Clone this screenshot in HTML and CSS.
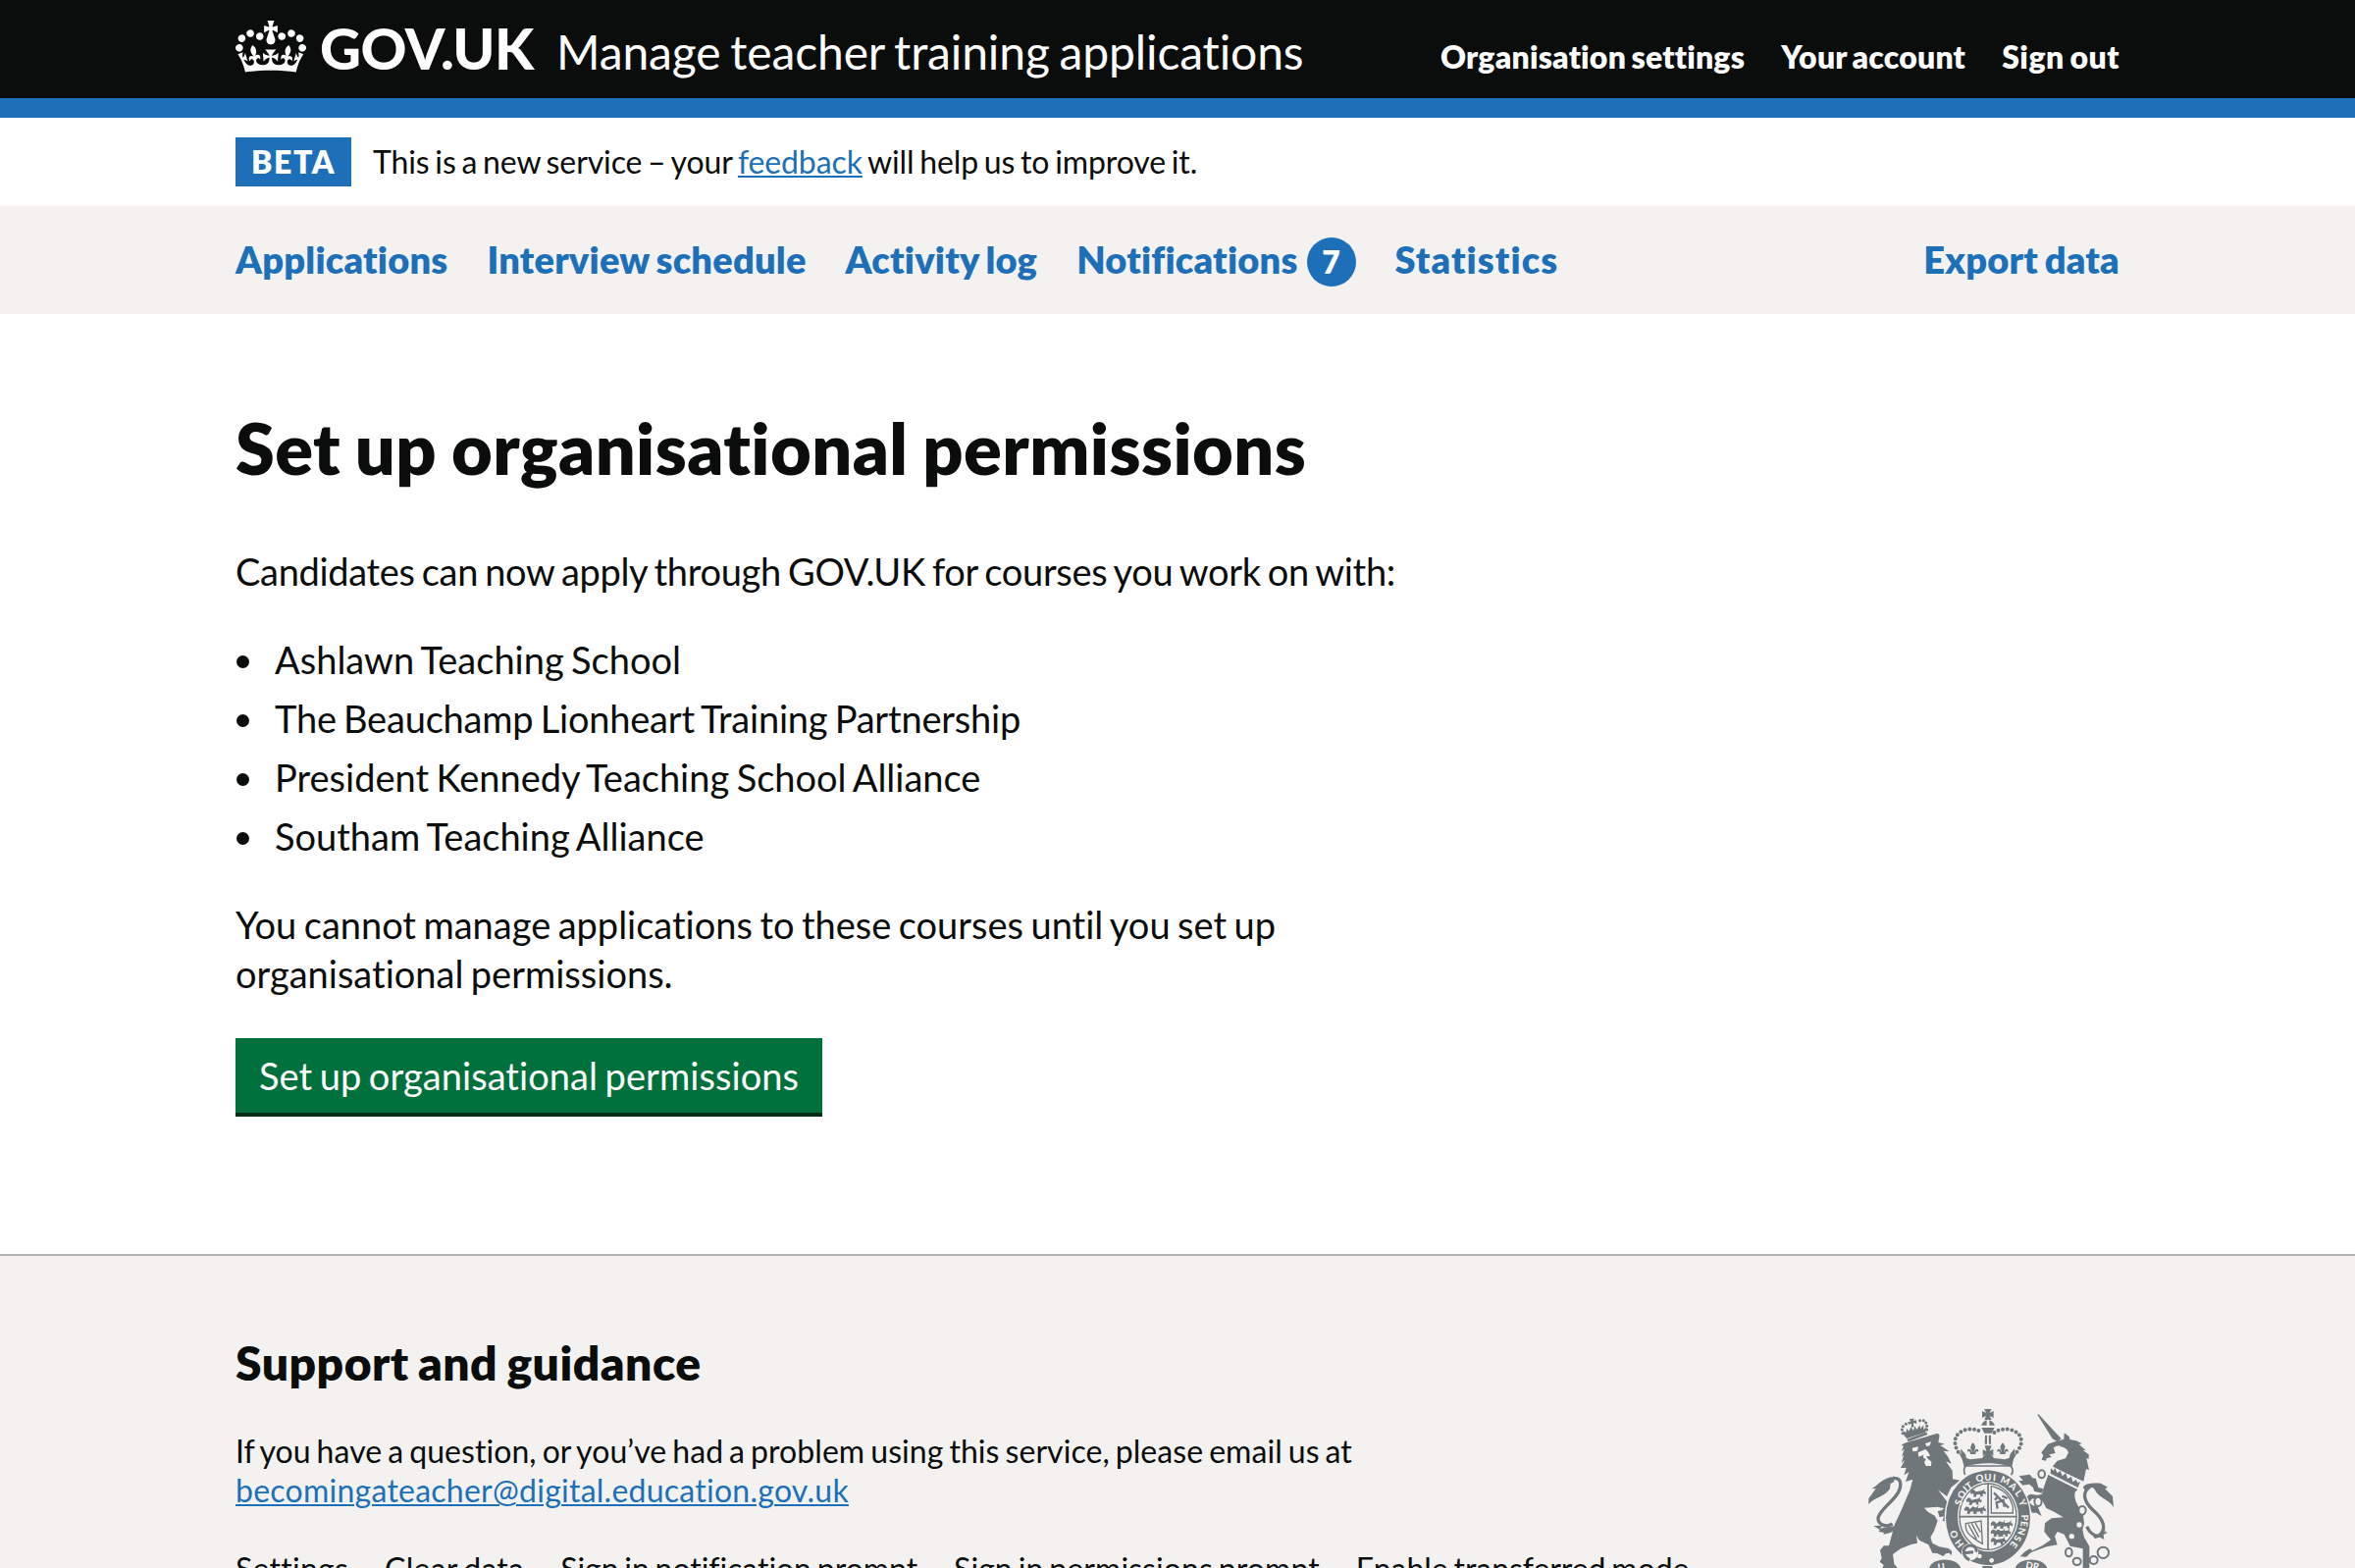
FILE: index.html
```html
<!DOCTYPE html>
<html lang="en">
<head>
<meta charset="utf-8">
<title>Set up organisational permissions - Manage teacher training applications - GOV.UK</title>
<link rel="stylesheet" href="styles.css">
</head>
<body>
<header class="header">
  <div class="container header-inner">
    <a class="logo" href="#">
      <svg class="crown" viewBox="0 0 132 97" preserveAspectRatio="none" aria-hidden="true"><path fill="currentColor" d="M25 30.2c3.5 1.5 7.7-.2 9.1-3.7 1.5-3.6-.2-7.8-3.9-9.2-3.6-1.4-7.6.3-9.1 3.9-1.4 3.5.3 7.5 3.9 9zM9 39.5c3.6 1.5 7.8-.2 9.2-3.7 1.5-3.6-.2-7.8-3.9-9.1-3.6-1.5-7.6.2-9.1 3.8-1.4 3.5.3 7.5 3.8 9zM4.4 57.2c3.5 1.5 7.7-.2 9.1-3.8 1.5-3.6-.2-7.7-3.9-9.1-3.5-1.5-7.6.3-9.1 3.8-1.4 3.5.3 7.6 3.9 9.1zm38.3-21.4c3.5 1.5 7.7-.2 9.1-3.8 1.5-3.6-.2-7.7-3.9-9.1-3.6-1.5-7.6.3-9.1 3.8-1.3 3.6.4 7.7 3.9 9.1zm64.4-5.6c-3.6 1.5-7.8-.2-9.1-3.7-1.5-3.6.2-7.8 3.8-9.2 3.6-1.4 7.7.3 9.2 3.9 1.3 3.5-.4 7.5-3.9 9zm15.9 9.3c-3.6 1.5-7.7-.2-9.1-3.7-1.5-3.6.2-7.8 3.7-9.1 3.6-1.5 7.7.2 9.2 3.8 1.5 3.5-.3 7.5-3.8 9zm4.7 17.7c-3.6 1.5-7.8-.2-9.2-3.8-1.5-3.6.2-7.7 3.9-9.1 3.6-1.5 7.7.3 9.2 3.8 1.3 3.5-.4 7.6-3.9 9.1zM89.3 35.8c-3.6 1.5-7.8-.2-9.2-3.8-1.4-3.6.2-7.7 3.9-9.1 3.6-1.5 7.7.3 9.2 3.8 1.4 3.6-.3 7.7-3.9 9.1zM69.7 17.7l8.9 4.7V9.3l-8.9 2.8c-.2-.3-.5-.6-.9-.9L72.4 0H59.6l3.5 11.2c-.3.3-.6.5-.9.9l-8.8-2.8v13.1l8.8-4.7c.3.3.6.7.9.9l-5 15.4v.1c-.2.8-.4 1.6-.4 2.4 0 4.1 3.1 7.5 7 8.1h.2c.3 0 .7.1 1 .1.4 0 .7 0 1-.1h.2c4-.6 7.1-4.1 7.1-8.1 0-.8-.1-1.7-.4-2.4V34l-5.1-15.4c.4-.2.7-.6 1-.9zM66 92.8c16.9 0 32.8 1.1 47.1 3.2 4-16.9 8.9-26.7 14-33.5l-9.6-3.4c1 4.9 1.1 7.2 0 10.2-1.5-1.4-3-4.3-4.2-8.7L108.6 76c2.8-2 5-3.2 7.5-3.3-4.4 9.4-10 11.9-13.6 11.2-4.3-.8-6.3-4.6-5.6-7.9 1-4.7 5.7-5.9 8-.5 4.3-8.7-3-11.4-7.6-8.8 7.1-7.2 7.9-13.5 2.1-21.1-8 6.1-8.1 12.3-4.5 20.8-4.7-5.4-12.1-2.5-9.5 6.2 3.4-5.2 7.9-2 7.2 3.1-.6 4.3-6.4 7.8-13.5 7.2-10.3-.9-10.9-8-11.2-13.8 2.5-.5 7.1 1.8 11 7.3L80.2 60c-4.1 4.4-8 5.3-12.3 5.4 1.4-4.4 8-11.6 8-11.6H55.5s6.4 7.2 7.9 11.6c-4.2-.1-8-1-12.3-5.4l1.4 16.4c3.9-5.5 8.5-7.7 10.9-7.3-.3 5.8-.9 12.8-11.1 13.8-7.2.6-12.9-2.9-13.5-7.2-.7-5 3.8-8.3 7.1-3.1 2.7-8.7-4.6-11.6-9.4-6.2 3.7-8.5 3.6-14.7-4.6-20.8-5.8 7.6-5 13.9 2.2 21.1-4.7-2.6-11.9.1-7.7 8.8 2.3-5.5 7.1-4.2 8.1.5.7 3.3-1.3 7.1-5.7 7.9-3.5.7-9-1.8-13.5-11.2 2.5.1 4.7 1.3 7.5 3.3l-4.7-15.4c-1.2 4.4-2.7 7.2-4.3 8.7-1.1-3-.9-5.3 0-10.2l-9.5 3.4c5 6.9 9.9 16.7 14 33.5 14.8-2.1 30.8-3.2 47.7-3.2z"/></svg>
      <span class="logotype">GOV.UK</span>
    </a>
    <a class="service-name" href="#">Manage teacher training applications</a>
    <nav class="account-nav">
      <a href="#">Organisation settings</a>
      <a href="#">Your account</a>
      <a class="sign-out" href="#">Sign out</a>
    </nav>
  </div>
</header>
<div class="brand-bar"></div>
<div class="container phase-banner">
  <strong class="tag">BETA</strong>
  <span class="phase-text">This is a new service – your <a class="link" href="#">feedback</a> will help us to improve it.</span>
</div>
<div class="primary-nav">
  <nav class="container primary-nav-inner">
    <a href="#">Applications</a>
    <a href="#">Interview schedule</a>
    <a href="#">Activity log</a>
    <a class="notifications" href="#">Notifications<span class="count">7</span></a>
    <a class="statistics" href="#">Statistics</a>
    <a class="export" href="#">Export data</a>
  </nav>
</div>
<main class="container main">
  <h1 class="title">Set up organisational permissions</h1>
  <p class="intro">Candidates can now apply through GOV.UK for courses you work on with:</p>
  <ul class="list">
    <li>Ashlawn Teaching School</li>
    <li class="tight">The Beauchamp Lionheart Training Partnership</li>
    <li>President Kennedy Teaching School Alliance</li>
    <li>Southam Teaching Alliance</li>
  </ul>
  <p>You cannot manage applications to these courses until you set up<br>organisational permissions.</p>
  <a class="button" href="#">Set up organisational permissions</a>
</main>
<footer class="footer">
  <div class="container footer-inner">
    <div class="support">
      <h2 class="support-title">Support and guidance</h2>
      <p class="small">If you have a question, or you’ve had a problem using this service, please email us at<br><a class="link email" href="#">becomingateacher@digital.education.gov.uk</a></p>
      <div class="footer-links">
        <a class="wide" href="#">Settings</a>
        <a class="wide" href="#">Clear data</a>
        <a href="#">Sign in notification prompt</a>
        <a class="mid" href="#">Sign in permissions prompt</a>
        <a href="#">Enable transferred mode</a>
      </div>
    </div>
    <svg class="crest" viewBox="72 45 750 489" aria-hidden="true">
      <defs>
        <path id="leopard" d="M0 8l6-8 8 2 2 5 22-4 6-7-2 9 6 3-2 8-5-4-4 3 2 7-8-1-1-6-11 1-2 7-9-1 3-6-4-4-5 2z"/>
        <g id="fleur"><path d="M0-17C-10-6-8 2-3 9L-3 18H3L3 9C8 2 10-6 0-17Z"/><path d="M-3 12C-8-2-20 0-16 12C-12 6-8 10-8 18H8C8 10 12 6 16 12C20 0 8-2 3 12Z"/></g>
      </defs>
      <!-- lion -->
      <g fill="currentColor">
        <path d="M173 157L190 150L284 122L290 128L286 150L306 155L292 159L320 178L302 176L316 194L326 215L309 208L329 236L330 262L352 266L325 288L312 316L348 337L339 347L347 367L352 382L340 400L320 408L312 394L299 389L303 376L290 379L284 360L296 358L304 352L283 347L243 350L254 362L275 374L284 390L273 421L262 440L268 458L289 469L317 474L327 482L327 495L319 488L309 490L301 498L282 489L268 488L256 463L228 449L219 434L222 458L203 462L171 475L147 492L151 521L161 534H115L119 525L107 515L113 504L108 480L119 466L135 466L153 400L174 355L199 296L208 263L186 270L196 241L181 250L188 228L171 228L184 204L173 213L181 188L174 194L182 171L173 176L180 162Z"/>
        <path d="M151 255C116 257 102 281 82 292L95 291L73 322L73 340C91 315 116 322 138 292L140 276L151 270Z"/>
        <path d="M88 405L115 404L108 413L130 409L159 405C149 431 127 426 118 433L120 426L104 423L107 417Z"/>
        <path d="M190 140L250 119L253 126L194 148Z"/>
        <path d="M182 130L178 114L187 120L190 107L196 116L202 103L210 114L214 100L220 111L230 97L231 109L241 97L241 111L250 103L247 120L190 138Z"/>
        <path d="M198 78L213 77L209 84L219 82L220 93L210 90L211 103L204 104L203 92L195 96L193 87L201 87Z"/>
        <g><circle cx="177" cy="122" r="4.5"/><circle cx="175" cy="111" r="4.5"/><circle cx="178" cy="101" r="4.5"/><circle cx="187" cy="94" r="4.5"/><circle cx="230" cy="83" r="4.5"/><circle cx="241" cy="83" r="4.5"/><circle cx="248" cy="90" r="4.5"/><circle cx="251" cy="100" r="4.5"/><circle cx="251" cy="111" r="4.5"/></g>
      </g>
      <path d="M148 259C178 257 174 289 158 311C134 343 108 357 102 381C101 402 127 411 146 399" fill="none" stroke="currentColor" stroke-width="10"/>
      <g class="ground">
        <path d="M206 167L225 163L222 176L208 178ZM246 153L264 148L260 160L250 162ZM224 181L247 171L255 179L261 192L249 193L255 201L265 209L264 222H248L243 211L248 201L240 197L241 188L226 194Z"/>
        <path d="M285 295L330 328L337 335L312 330Z"/>
      </g>
      <!-- unicorn -->
      <g fill="currentColor">
        <path d="M588 64L594 65L662 139L650 148L635 139Z"/>
        <path d="M601 181L621 155L638 149L670 140L671 121L686 132L688 141L708 145L725 154L716 156L737 174L728 174L746 187L746 201L739 198L747 235L738 231L730 269L634 225L650 206L675 199L684 181C679 164 660 160 638 166L644 183L625 187L632 195L617 199L615 206L602 203L607 190Z"/>
        <path d="M622 249L712 294L704 302C700 323 710 342 728 365L732 397L727 418L732 440L748 468V534H728V475L689 467L671 431L650 423L642 437L650 463L617 469L570 486L555 500L536 499L552 483L567 475L574 481L605 465L630 448L610 423L612 397L632 382L668 379L640 362L616 351L604 328L574 322L563 333L575 343L589 344L602 376L586 365L573 365L563 346L548 341L550 320L567 308L589 311L603 308L609 286Z"/>
        <path d="M533 253L566 248L574 259L584 260L592 288L607 292L603 305L579 299L576 288L564 278L544 281L532 268L545 266Z"/>
        <path d="M728 287C738 274 756 274 783 275L804 287L796 292L819 315L822 348C806 324 783 321 770 304C764 294 763 286 750 287L737 300Z"/>
        <path d="M758 434C776 438 788 427 800 416L795 424L804 425L791 432L793 447L780 440L764 444Z"/>
      </g>
      <path d="M754 283C719 303 735 335 759 357C789 383 804 414 777 435C762 438 748 424 740 407" fill="none" stroke="currentColor" stroke-width="10"/>
      <g class="ground"><path d="M640 163L656 160L664 166L648 167ZM667 181L676 181L674 194L661 201Z"/><circle cx="717" cy="402" r="8"/><circle cx="694" cy="437" r="8"/><path d="M633 222L731 272L714 294L624 248Z"/></g>
      <path fill="currentColor" d="M630 229L639 237L642 227L650 244L659 236L665 253L676 244L681 261L693 255L697 271L707 264L712 274L720 269L713 288L629 245Z"/>
      <g fill="none" stroke="currentColor" stroke-width="6"><ellipse cx="602" cy="247" rx="10" ry="12"/><ellipse class="ground" cx="591" cy="331" rx="11" ry="14"/><ellipse class="ground" cx="726" cy="358" rx="11" ry="13"/><ellipse cx="685" cy="486" rx="10" ry="13"/><ellipse cx="710" cy="514" rx="12" ry="11"/><circle cx="761" cy="510" r="12"/><circle cx="790" cy="487" r="17"/></g>
      <!-- garter and shield -->
      <ellipse class="ground" cx="438" cy="381" rx="133" ry="150"/>
      <ellipse cx="438" cy="380" rx="129" ry="145" fill="currentColor"/>
      <ellipse class="ground" cx="438" cy="377" rx="93" ry="107"/>
      <ellipse cx="438" cy="377" rx="87" ry="101" fill="none" stroke="currentColor" stroke-width="4"/>
      <g fill="none" stroke="currentColor" stroke-width="5"><path d="M438 274V480M350 377H526"/><path d="M448 290V366H514V346C507 318 487 292 448 284Z" stroke-width="4"/><path d="M370 398L417 390L421 460L407 452C385 435 367 427 370 398ZM378 401L403 446M388 398L410 440M399 396L415 425" stroke-width="4"/><path d="M456 304L484 333L501 350M481 314L497 321M467 353L464 334L485 327L488 347M468 315L459 326" stroke-width="7"/></g>
      <g fill="currentColor"><use href="#leopard" x="384" y="294"/><use href="#leopard" x="371" y="319"/><use href="#leopard" x="365" y="346"/><use href="#leopard" x="384" y="346"/><use href="#leopard" x="446" y="391"/><use href="#leopard" x="466" y="391"/><use href="#leopard" x="446" y="416"/><use href="#leopard" x="460" y="416"/><use href="#leopard" x="446" y="441"/></g>
      <g class="motto"><text transform="translate(354 345) rotate(-68)">S</text><text transform="translate(360 325) rotate(-58)">O</text><text transform="translate(373 303) rotate(-42)">I</text><text transform="translate(379 296) rotate(-35)">T</text><text transform="translate(402 271) rotate(-8)">Q</text><text transform="translate(427 268)">U</text><text transform="translate(452 268) rotate(5)">I</text><text transform="translate(474 271) rotate(22)">M</text><text transform="translate(500 286) rotate(40)">A</text><text transform="translate(519 305) rotate(54)">L</text><text transform="translate(530 330) rotate(66)">Y</text><text transform="translate(540 371) rotate(88)">P</text><text transform="translate(539 390) rotate(96)">E</text><text transform="translate(534 409) rotate(105)">N</text><text transform="translate(523 432) rotate(116)">S</text><text transform="translate(513 450) rotate(124)">E</text><text transform="translate(365 461) rotate(-128)">H</text><text transform="translate(348 438) rotate(-112)">O</text></g>
      <g><circle class="ground" cx="383" cy="485" r="26"/><path d="M370 470C360 479 362 501 382 509M370 470C388 458 407 471 401 485M364 488L393 485" fill="none" stroke="currentColor" stroke-width="9"/><circle class="ground" cx="412" cy="498" r="7"/><circle class="ground" cx="449" cy="511" r="7"/></g>
      <!-- crown over the shield -->
      <path class="ground" d="M364 218H514V250L492 246L438 233L383 247L364 250Z"/>
      <path d="M372 222H503C514 223 517 242 508 249" fill="none" stroke="currentColor" stroke-width="5"/>
      <path d="M372 222C362 225 364 241 368 249" fill="none" stroke="currentColor" stroke-width="5"/>
      <g fill="currentColor">
        <path d="M365 225L359 202L347 178L356 186L354 169L369 186L372 198L383 202L420 198L430 185L422 192V172L433 177L428 160H449L443 177L454 170V192L446 185L456 198L490 202L503 197L506 185L520 168L519 186L528 179L516 202L511 225C465 210 410 210 365 225Z"/>
        <use href="#fleur" x="392" y="168"/><use href="#fleur" x="483" y="168"/>
        <path d="M426 48H449L442 60L455 54V75L443 69L449 81H427L432 69L420 75V54L433 60ZM418 98C421 87 430 84 434 82V98ZM442 82C448 84 455 89 459 98H442ZM418 105H458L449 122H427ZM429 128H435V155H428ZM440 128H447V155H441Z"/>
      </g>
      <g fill="none" stroke="currentColor" stroke-width="12" stroke-linecap="round" stroke-dasharray="0 14"><path d="M347 179C329 151 335 120 371 111C389 108 405 109 420 121"/><path d="M526 179C550 151 542 120 507 111C488 108 472 109 456 121"/></g>
      <!-- scroll ends -->
      <g fill="currentColor"><path d="M258 534C269 501 342 500 355 534ZM521 534C533 501 606 500 619 534ZM421 528H451V534H421Z"/></g>
      <g class="motto"><text x="286" y="542" transform="rotate(-8 286 542)">U</text><text x="552" y="534" transform="rotate(10 552 534)">DR</text></g>
    </svg>
  </div>
</footer>
</body>
</html>
```
FILE: styles.css
```css
* { box-sizing: border-box; }

body {
  margin: 0;
  height: 1598px;
  overflow: hidden;
  background: #fff;
  color: #0b0c0c;
  font-family: Lato, "Noto Sans", sans-serif;
  font-size: 38px;
  line-height: 50px;
  font-variant-ligatures: none;
  white-space: nowrap;
  word-spacing: -0.06em;
}

a { color: inherit; text-decoration: none; }
h1, h2, p, ul { margin: 0; padding: 0; }

.container { width: 1920px; margin: 0 auto; }

/* Header */
.header { height: 100px; background: #0b0c0c; color: #fff; }
.header-inner { display: flex; }
.logo { display: flex; width: 327px; }
.crown { width: 72px; height: 53px; margin-top: 21px; }
.logotype { margin-left: 14px; font-size: 58px; font-weight: 900; line-height: 97px; letter-spacing: -0.008em; }
.service-name { font-size: 48px; line-height: 105px; letter-spacing: -0.0028em; }
.account-nav { display: flex; gap: 37px; margin-left: auto; font-size: 32px; font-weight: 800; line-height: 116px; letter-spacing: 0.0065em; }
.sign-out { letter-spacing: 0.0156em; }

.brand-bar { height: 20px; background: #1d70b8; }

/* Phase banner */
.phase-banner { display: flex; align-items: center; height: 90px; font-size: 32px; }
.tag { width: 118px; height: 50px; padding-left: 16px; background: #1d70b8; color: #fff; font-weight: 800; letter-spacing: 0.05em; }
.phase-text { margin-left: 22px; letter-spacing: -0.0035em; }
.link { color: #1d70b8; text-decoration: underline; text-decoration-thickness: 2px; text-underline-offset: 2px; }

/* Primary navigation */
.primary-nav { height: 110px; background: #f3f2f1; color: #1d70b8; }
.primary-nav-inner { display: flex; gap: 40px; font-weight: 800; line-height: 108px; letter-spacing: 0.0055em; }
.notifications { display: flex; }
.count { width: 50px; height: 50px; margin: 32px 0 0 9px; border-radius: 50%; background: #1d70b8; color: #fff; font-size: 32px; line-height: 49px; text-align: center; }
.statistics { letter-spacing: 0.028em; }
.export { margin-left: auto; }

/* Content */
.main { height: 958px; padding-top: 96px; }
.title { margin-bottom: 61px; font-size: 72px; font-weight: 800; line-height: 80px; letter-spacing: 0.0057em; }
.intro { letter-spacing: -0.0084em; }
.list { display: grid; gap: 10px; margin: 40px 0; list-style: none; }
.list li { display: flex; align-items: center; }
.list li::before { content: ""; width: 13px; height: 13px; margin: 4px 26px 0 1px; border-radius: 50%; background: #0b0c0c; }
.list .tight { letter-spacing: -0.0053em; }
.button { display: block; width: 598px; height: 76px; margin-top: 41px; padding-left: 24px; background: #00703c; box-shadow: 0 4px 0 #002d18; color: #fff; line-height: 76px; letter-spacing: 0.0016em; }

/* Footer */
.footer { height: 320px; border-top: 2px solid #b1b4b6; background: #f3f2f1; }
.footer-inner { display: flex; justify-content: space-between; }
.support { padding-top: 79px; }
.support-title { font-size: 48px; font-weight: 800; line-height: 60px; letter-spacing: 0.0098em; }
.small { margin-top: 40px; font-size: 32px; line-height: 40px; letter-spacing: 0.002em; }
.email { letter-spacing: 0.0078em; }
.footer-links { display: flex; gap: 37px; margin-top: 40px; font-size: 32px; line-height: 40px; letter-spacing: -0.0015em; }
.wide { letter-spacing: 0.008em; }
.mid { letter-spacing: 0.002em; }
.crest { width: 250px; height: 163px; margin: 155px 6px 0 0; color: #6f777b; }
.ground { fill: #f3f2f1; }
.motto { fill: #f3f2f1; font: 900 29px Lato, sans-serif; }
```
